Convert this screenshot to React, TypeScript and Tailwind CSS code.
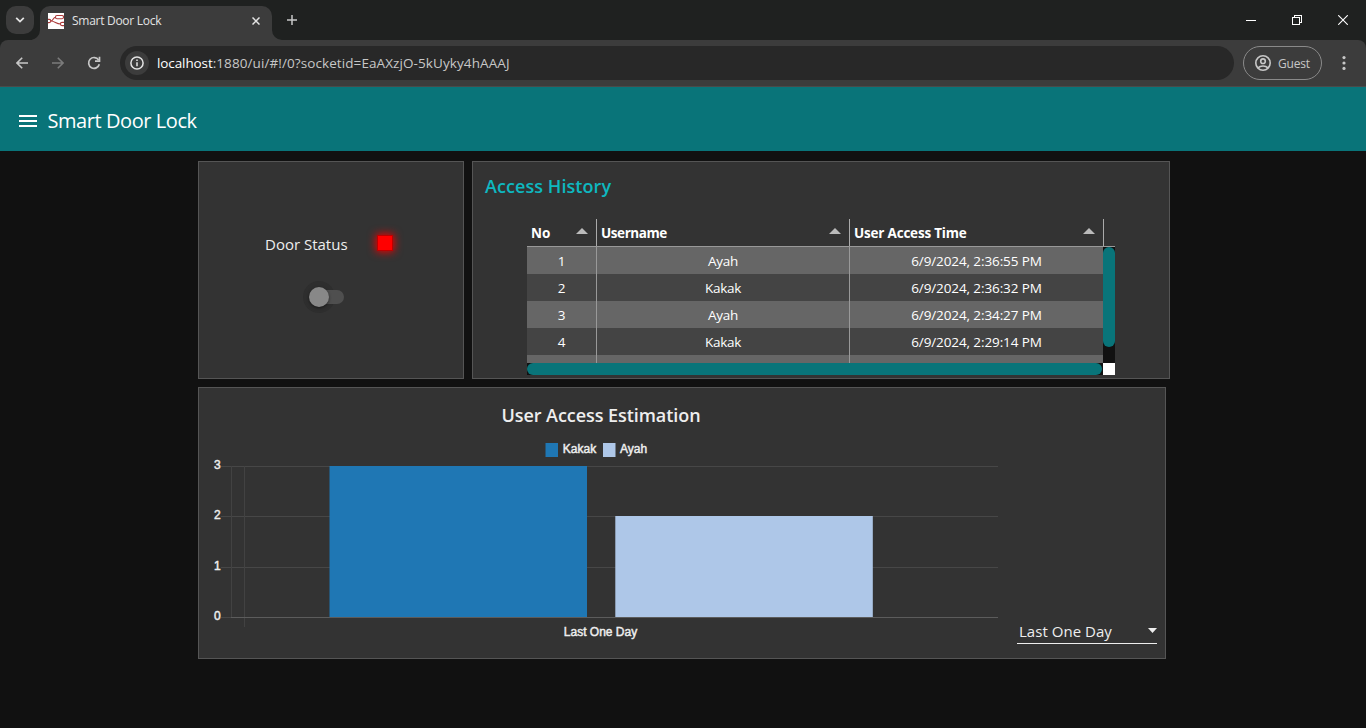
import React from "react";

const rows = [
  ["1", "Ayah", "6/9/2024, 2:36:55 PM"],
  ["2", "Kakak", "6/9/2024, 2:36:32 PM"],
  ["3", "Ayah", "6/9/2024, 2:34:27 PM"],
  ["4", "Kakak", "6/9/2024, 2:29:14 PM"],
  ["", "", ""],
];

const columns = [
  { name: "No", width: "w-[70px]", tracking: "tracking-[-0.1px]" },
  { name: "Username", width: "w-[253px]", tracking: "tracking-[-0.42px]" },
  { name: "User Access Time", width: "w-[254px]", tracking: "tracking-[-0.2px]" },
];

function Favicon() {
  return (
    <svg width="16" height="16" viewBox="0 0 16 16" className="block shrink-0 bg-white">
      <g fill="none" stroke="#ac3c3c" strokeWidth="1.1">
        <rect x="7.5" y="2.5" width="8" height="3.2" rx="1.4" />
        <path d="M0 6.4h1.2a1.6 1.6 0 0 1 0 3.2H0" />
        <path d="M16 9.4h-2a1.3 1.3 0 0 0 0 3.2h2" />
        <path d="M2.8 8C5.5 8 5 4.2 7.5 4.2M2.8 8C7 8 8 11 12.6 11" />
      </g>
    </svg>
  );
}

function TabStrip() {
  return (
    <div className="flex h-10 bg-[#1f2120] text-[#e3e3e3]">
      <div className="ml-1.5 mt-1.5 flex h-7 w-7 items-center justify-center rounded-[10px] bg-[#3c3c3c]">
        <svg width="10" height="6" viewBox="0 0 10 6" fill="none" stroke="#e3e3e3" strokeWidth="1.8">
          <path d="M1.2 0.9 5 4.6 8.8 0.9" />
        </svg>
      </div>
      <svg width="8" height="34" viewBox="0 0 8 34" className="-ml-[2px] mt-1.5 block">
        <path d="M8 24v10H-2a10 10 0 0 0 10-10z" fill="#3c3c3c" />
      </svg>
      <div className="mt-1.5 flex h-[34px] w-[232px] items-center rounded-t-[10px] bg-[#3c3c3c] pb-[5px] pl-2">
        <Favicon />
        <span className="ml-2 flex-1 pt-px text-[12px] leading-4 tracking-[-0.28px]">Smart Door Lock</span>
        <svg width="8" height="8" viewBox="0 0 8 8" className="mr-3 block" stroke="#e3e3e3" strokeWidth="1.5">
          <path d="M0.5 0.5l7 7M7.5 0.5l-7 7" />
        </svg>
      </div>
      <svg width="10" height="34" viewBox="0 0 10 34" className="mt-1.5 block">
        <path d="M0 24v10h10a10 10 0 0 1-10-10z" fill="#3c3c3c" />
      </svg>
      <svg width="10" height="10" viewBox="0 0 10 10" className="ml-[5px] mt-[15px] block" stroke="#c7c7c7" strokeWidth="1.5">
        <path d="M5 0v10M0 5h10" />
      </svg>
      <div className="ml-auto flex items-start">
        <svg width="10" height="10" viewBox="0 0 10 10" className="mr-9 mt-[15px] block" shapeRendering="crispEdges">
          <path d="M0 5h10v1H0z" fill="#fff" />
        </svg>
        <svg width="10" height="10" viewBox="0 0 10 10" className="mr-9 mt-[15px] block" fill="none" stroke="#fff" shapeRendering="crispEdges">
          <path d="M0.5 2.5h7v7h-7zM2.5 2.5v-2h7v7h-2" />
        </svg>
        <svg width="10" height="10" viewBox="0 0 10 10" className="mr-[18px] mt-[15px] block" stroke="#fff" strokeWidth="1.1">
          <path d="M0.2 0.2l9.6 9.6M9.8 0.2L0.2 9.8" />
        </svg>
      </div>
    </div>
  );
}

function Toolbar() {
  return (
    <div className="bg-[#1f2120]">
      <div className="flex h-[47px] items-center rounded-t-[8px] border-b border-[#4a4a4a] bg-[#3c3c3c]">
        <svg width="12" height="12" viewBox="0 0 12 12" className="ml-4 block" fill="none" stroke="#c7c7c7" strokeWidth="1.6">
          <path d="M12 6H1.2M6.2 0.8L1 6l5.2 5.2" />
        </svg>
        <svg width="12" height="12" viewBox="0 0 12 12" className="ml-6 block" fill="none" stroke="#7b7b7b" strokeWidth="1.6">
          <path d="M0 6h10.8M5.8 0.8L11 6l-5.2 5.2" />
        </svg>
        <svg width="14" height="14" viewBox="0 0 14 14" className="ml-[23px] block" fill="none" stroke="#c7c7c7" strokeWidth="1.7">
          <path d="M12.3 8.2A5.4 5.4 0 1 1 11.6 4" />
          <path d="M12.5 0.8v4.4H8" />
        </svg>
        <div className="ml-[19px] flex h-[34px] w-[1114px] items-center rounded-full bg-[#282828] pl-[5px]">
          <div className="flex h-6 w-6 items-center justify-center rounded-full bg-[#3c3c3c]">
            <svg width="14" height="14" viewBox="0 0 14 14" className="block" fill="none" stroke="#e3e3e3" strokeWidth="1.5">
              <circle cx="7" cy="7" r="6.1" />
              <path d="M7 6.2v4M7 3.6v1.5" />
            </svg>
          </div>
          <span className="ml-2 whitespace-nowrap text-[13.5px] leading-5 tracking-[0.09px] text-[#c7c7c7]">
            <span className="tracking-[-0.1px] text-white">localhost</span>:1880/ui/#!/0?socketid=EaAXzjO-5kUyky4hAAAJ
          </span>
        </div>
        <div className="ml-[9px] flex h-[34px] w-[79px] items-center rounded-full border border-[#8a8a8a] pl-[11px]">
          <svg width="16" height="16" viewBox="0 0 16 16" className="block" fill="none" stroke="#c7c7c7" strokeWidth="1.6">
            <circle cx="8" cy="8" r="7.2" />
            <circle cx="8" cy="6.2" r="2.3" />
            <path d="M3 12.9c2.6-2.6 7.4-2.6 10 0" />
          </svg>
          <span className="ml-[7px] pt-px text-[12px] leading-4 tracking-[-0.2px] text-[#c7c7c7]">Guest</span>
        </div>
        <svg width="4" height="16" viewBox="0 0 4 16" className="ml-5 block" fill="#c7c7c7">
          <circle cx="2" cy="2.6" r="1.6" />
          <circle cx="2" cy="8" r="1.6" />
          <circle cx="2" cy="13.4" r="1.6" />
        </svg>
      </div>
    </div>
  );
}

function DoorStatusCard() {
  return (
    <section className="flex h-[218px] w-[266px] flex-col border border-[#555] bg-[#333]">
      <div className="mt-[70px] flex h-6 items-center pl-[66px]">
        <span className="w-[112px] whitespace-nowrap text-[15px] leading-6 text-[#eee]">Door Status</span>
        <span className="-mt-[3px] h-4 w-4 border border-[#b00] bg-[#f00] shadow-[0_0_8px_1px_#f00000]" />
      </div>
      <div className="ml-[104px] mt-[25px] flex h-8 w-[42px] items-center">
        <div className="flex h-8 w-8 shrink-0 items-center justify-center rounded-full bg-[#2e2e2e]">
          <div className="z-10 h-5 w-5 rounded-full bg-[#888] shadow-[0_1px_3px_rgba(0,0,0,0.5)]" />
        </div>
        <div className="-ml-[18px] h-[14px] w-[27px] shrink-0 rounded-full bg-[#4f4f4f]" />
      </div>
    </section>
  );
}

function AccessHistoryCard() {
  return (
    <section className="h-[218px] w-[698px] border border-[#555] bg-[#333] pl-3 pt-3">
      <h2 className="h-[45px] text-[18px] font-semibold leading-[25px] tracking-[0.07px] text-[#0eb8c0]">Access History</h2>
      <div className="ml-[42px] w-[588px] text-[13.5px] text-white">
        <div className="flex h-7 border-b border-[#999]">
          {columns.map((c) => (
            <div key={c.name} className={"flex items-center justify-between border-r border-[#aaa] pl-1 pr-2 " + c.width}>
              <span className={"pt-px text-[13.5px] font-bold leading-5 " + c.tracking}>{c.name}</span>
              <svg width="12" height="6" viewBox="0 0 12 6" className="-mt-1 block">
                <path d="M6 0l6 6H0z" fill="#bbb" />
              </svg>
            </div>
          ))}
        </div>
        <div className="flex h-[116px]">
          <div className="w-[576px] overflow-hidden">
            {rows.map((r, i) => (
              <div key={i} className={"flex h-[27px] " + (i % 2 ? "bg-[#444]" : "bg-[#666]")}>
                <span className="w-[70px] border-r border-[#999] text-center text-[13.5px] leading-[28px]">{r[0]}</span>
                <span className="w-[253px] border-r border-[#999] text-center text-[13.5px] leading-[28px] tracking-[-0.3px]">{r[1]}</span>
                <span className="w-[253px] text-center text-[13.5px] leading-[28px] tracking-[-0.1px]">{r[2]}</span>
              </div>
            ))}
          </div>
          <div className="w-3 bg-[#111]">
            <div className="h-[100px] rounded-full bg-[#097479]" />
          </div>
        </div>
        <div className="flex h-3">
          <div className="w-[576px] bg-[#111]">
            <div className="h-3 w-[575px] rounded-full bg-[#097479]" />
          </div>
          <div className="w-3 bg-white" />
        </div>
      </div>
    </section>
  );
}

const labelStyle = "fill-[#eee] stroke-[#eee] stroke-[0.45px] font-['Liberation_Sans',Arial,sans-serif] text-[12px]";

function BarChart() {
  return (
    <svg width="806" height="218" viewBox="199 437 806 218" className="block">
      <rect x="545.5" y="443" width="12.5" height="14" fill="#1f77b4" />
      <text x="562.8" y="453" className={labelStyle}>Kakak</text>
      <rect x="603" y="443" width="12.5" height="14" fill="#aec7e8" />
      <text x="620" y="453" className={labelStyle}>Ayah</text>
      <g shapeRendering="crispEdges">
        <path d="M221 466h777v1H221zM221 516h777v1H221zM221 567h777v1H221z" fill="#474747" />
        <path d="M221 617h10v1H221z" fill="#474747" />
        <path d="M231 466h1v151h-1zM244 466h1v161h-1z" fill="#424242" />
        <path d="M231 617h767v1H231z" fill="#5c5c5c" />
      </g>
      <rect x="329.5" y="466" width="257.5" height="151" fill="#1f77b4" />
      <rect x="615.3" y="516" width="257.5" height="101" fill="#aec7e8" />
      <g textAnchor="end">
        <text x="220.7" y="469" className={labelStyle}>3</text>
        <text x="220.7" y="519" className={labelStyle}>2</text>
        <text x="220.7" y="570" className={labelStyle}>1</text>
        <text x="220.7" y="620" className={labelStyle}>0</text>
      </g>
      <text x="563.8" y="636" className={labelStyle}>Last One Day</text>
    </svg>
  );
}

function EstimationCard() {
  return (
    <section className="flex h-[272px] w-[968px] border border-[#555] bg-[#333]">
      <div className="w-[806px] pt-[14px]">
        <h2 className="h-[35px] whitespace-nowrap pr-0.5 text-center text-[18px] font-semibold leading-[27px] tracking-[-0.06px] text-[#eee]">
          User Access Estimation
        </h2>
        <BarChart />
      </div>
      <div className="ml-3 mt-auto mb-[14px] flex h-6 w-[140px] items-center justify-between border-b border-[#eee] pl-0.5">
        <span className="pb-0.5 text-[15px] leading-6 tracking-[0.03px] text-[#eee]">Last One Day</span>
        <svg width="9" height="5" viewBox="0 0 9 5" className="-mt-0.5 block">
          <path d="M0 0h9L4.5 5z" fill="#eee" />
        </svg>
      </div>
    </section>
  );
}

export default function App() {
  return (
    <div className="h-[728px] w-[1366px] overflow-hidden bg-[#111] font-['Open_Sans','Noto_Sans',sans-serif]">
      <TabStrip />
      <Toolbar />
      <header className="flex h-16 items-center bg-[#097479] pl-[19px] pt-1">
        <svg width="18" height="12" viewBox="0 0 18 12" className="block" shapeRendering="crispEdges">
          <path d="M0 0h18v2H0zM0 5h18v2H0zM0 10h18v2H0z" fill="#fff" />
        </svg>
        <h1 className="ml-[10.5px] text-[20px] leading-7 tracking-[-0.43px] text-white">Smart Door Lock</h1>
      </header>
      <main className="ml-[198px] mt-[10px] flex w-[972px] flex-col gap-2">
        <div className="flex gap-2">
          <DoorStatusCard />
          <AccessHistoryCard />
        </div>
        <EstimationCard />
      </main>
    </div>
  );
}
